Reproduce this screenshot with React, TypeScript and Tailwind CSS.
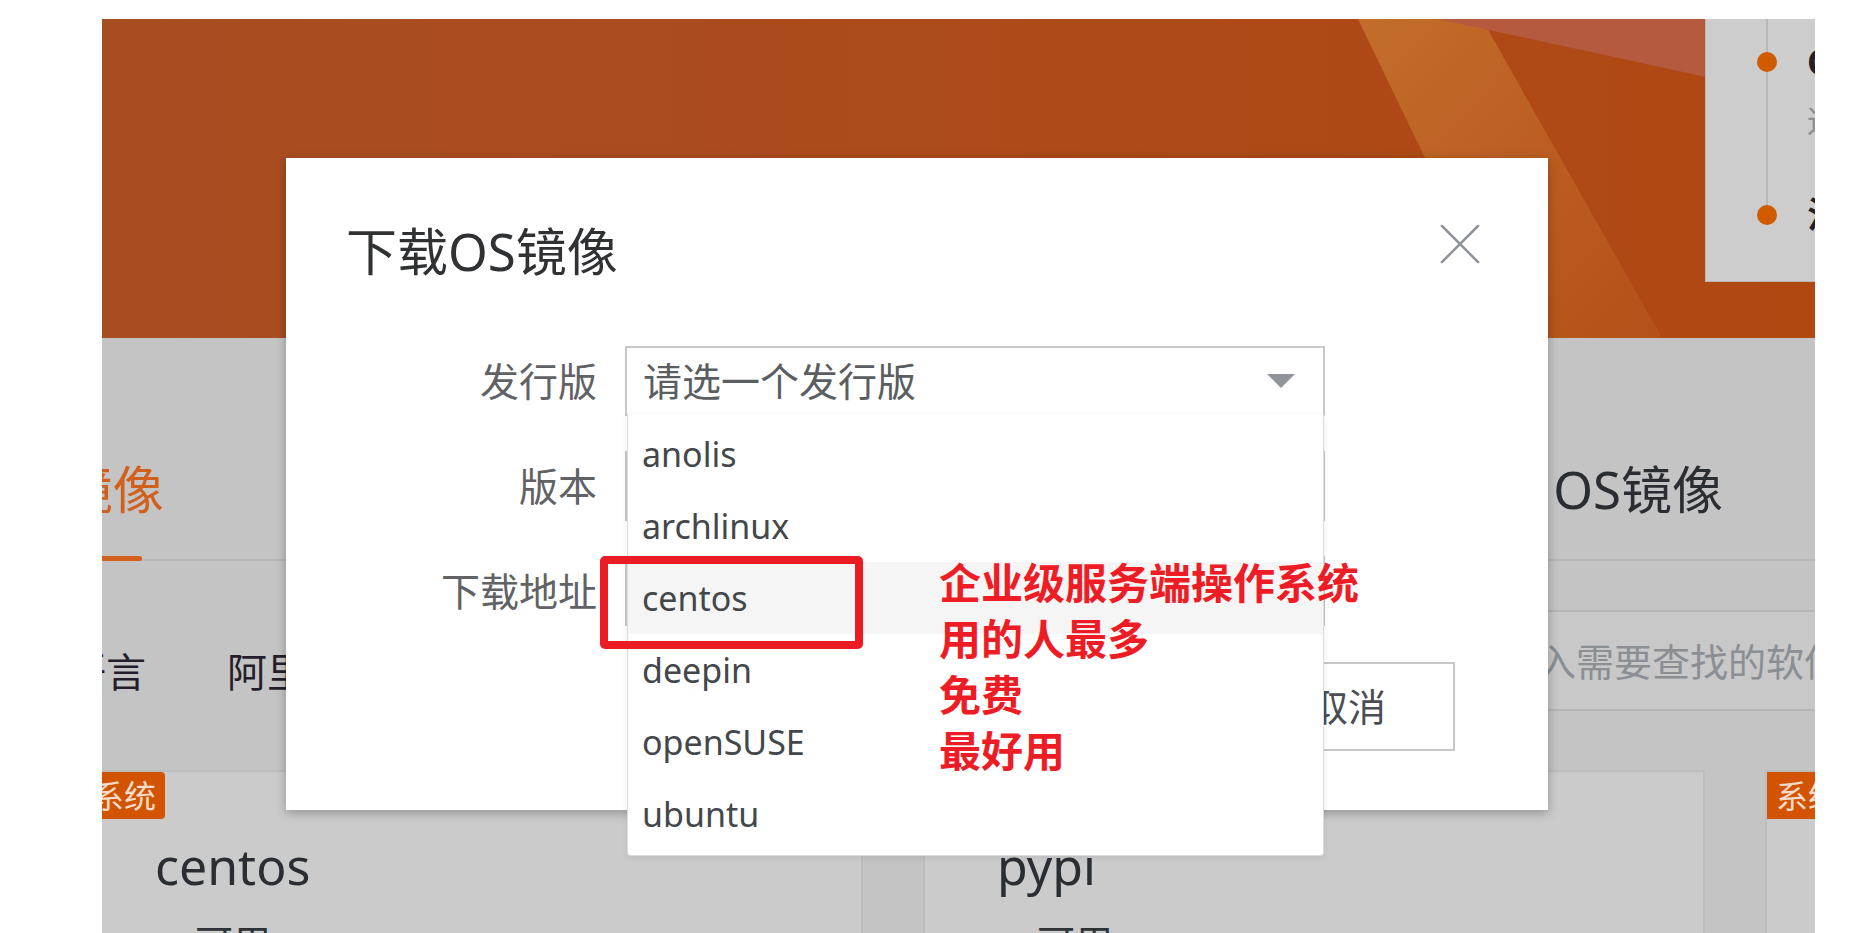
import React from 'react';

const distros = ['anolis', 'archlinux', 'centos', 'deepin', 'openSUSE', 'ubuntu'];

const Banner: React.FC = () => (
  <div className="relative h-[319px] bg-gradient-to-r from-[#a84d22] to-[#b04812] flex justify-end">
    {/* banner artwork */}
    <svg className="absolute inset-0" width="1713" height="319" viewBox="0 0 1713 319">
      <defs>
        <linearGradient id="band" x1="0" y1="0" x2="1" y2="1">
          <stop offset="0" stopColor="#c6742f" />
          <stop offset="0.6" stopColor="#bd5e22" />
          <stop offset="1" stopColor="#b5511a" />
        </linearGradient>
      </defs>
      <polygon points="1256,0 1380,0 1560,319 1410,319" fill="url(#band)" opacity="0.85" />
      <polygon points="1336,0 1604,0 1604,58" fill="#b5593f" />
    </svg>
    <div className="relative w-[400px] mr-[-290px] h-[263px] bg-[#cdcdcd] border-l border-b border-[#bdb7b3] pt-[19px]">
      <div className="absolute left-[60px] top-0 w-[2px] h-[192px] bg-[#b8b8b8]" />
      <div className="relative flex items-center h-[48px]">
        <span className="shrink-0 ml-[51px] w-[20px] h-[20px] rounded-full bg-[#d05a00]" />
        <span className="ml-[30px] text-[36px] font-bold text-[#1f2328] whitespace-nowrap">CentOS 8 停止维护</span>
      </div>
      <div className="mt-[13px] pl-[101px] h-[44px] text-[32px] leading-[44px] text-[#8e8e8e] whitespace-nowrap">逐步迁移至其他发行版</div>
      <div className="relative mt-[48px] flex items-center h-[48px]">
        <span className="shrink-0 ml-[51px] w-[20px] h-[20px] rounded-full bg-[#d05a00]" />
        <span className="ml-[30px] text-[36px] font-bold text-[#1f2328] whitespace-nowrap">注意事项</span>
      </div>
    </div>
  </div>
);

const Tabs: React.FC = () => (
  <div className="relative h-[223px] border-b-2 border-[#b8b8b8] flex items-end pb-[38px]">
    <span className="ml-[-108px] text-[51px] leading-[64px] text-[#d0601c] whitespace-nowrap">OS镜像</span>
    <div className="flex-1" />
    <span className="mr-[92px] text-[51px] leading-[64px] text-[#2a2d31] whitespace-nowrap">OS镜像</span>
    <div className="absolute bottom-[-2px] left-[-80px] w-[120px] h-[5px] rounded-full bg-[#d0601c]" />
  </div>
);

const FilterRow: React.FC = () => (
  <div className="h-[209px] flex items-start">
    <div className="mt-[85px] ml-[-116px] flex gap-[81px] text-[40px] leading-[52px] text-[#241e2c] whitespace-nowrap">
      <span>编程语言</span>
      <span>阿里巴巴</span>
      <span>操作系统</span>
    </div>
    <div className="flex-1" />
    <input
      readOnly
      placeholder="请输入需要查找的软件"
      className="mt-[49px] w-[500px] mr-[-107px] h-[101px] border-2 border-[#b5b5b5] bg-[#c8c8c8] pl-[38px] text-[38px] outline-none placeholder:text-[#8b8e92]"
    />
  </div>
);

const Card: React.FC<{ name: string }> = ({ name }) => (
  <div className="w-[782px] shrink-0 h-[300px] bg-[#cbcbcb] border-2 border-[#bdbdbd]">
    <span className="inline-block h-[47px] px-[9px] text-[32px] leading-[47px] bg-[#d35400] text-[#f3dccb] rounded-r-[4px]">系统</span>
    <div className="mt-[17px] pl-[72px] text-[50px] leading-[60px] text-[#2a2e33]">{name}</div>
    <div className="mt-[21px] pl-[112px] text-[38px] leading-[50px] text-[#2e3236]">可用</div>
  </div>
);

const Dialog: React.FC = () => (
  <div className="absolute left-[184px] top-[139px] w-[1262px] bg-white shadow-[0_3px_10px_rgba(0,0,0,0.28)]">
    <div className="flex justify-between pl-[60px] pr-[68px] pt-[60px]">
      <h2 className="text-[51px] leading-[66px] text-[#303133]">下载OS镜像</h2>
      <svg className="mt-[6px]" width="40" height="40" viewBox="0 0 40 40">
        <path d="M2 2 L38 38 M38 2 L2 38" stroke="#909399" strokeWidth="2.5" strokeLinecap="round" />
      </svg>
    </div>

    <div className="mt-[62px] flex flex-col gap-[35px]">
      <div className="flex items-center h-[70px]">
        <label className="ml-[60px] w-[251px] text-right text-[39px] text-[#606266]">发行版</label>
        <div className="relative ml-[28px] w-[700px] h-[70px] border-2 border-[#c6c8cc] flex items-center justify-between pl-[16px] pr-[28px]">
          <span className="text-[39px] text-[#5a5e62]">请选一个发行版</span>
          <svg width="28" height="14" viewBox="0 0 28 14">
            <polygon points="0,0 28,0 14,14" fill="#909399" />
          </svg>
          {/* open dropdown */}
          <ul className="absolute z-10 left-0 top-full w-[697px] bg-white border-x border-b border-[#dcdcdc] rounded-b-[4px] pt-[4px] pb-[5px] shadow-[0_2px_6px_rgba(0,0,0,0.08)]">
            {distros.map(d => (
              <li
                key={d}
                className={`h-[72px] flex items-center pl-[14px] text-[34px] text-[#43474b] ${d === 'centos' ? 'bg-[#f5f5f5]' : ''}`}
              >
                {d}
              </li>
            ))}
          </ul>
        </div>
      </div>
      <div className="flex items-center h-[70px]">
        <label className="ml-[60px] w-[251px] text-right text-[39px] text-[#606266]">版本</label>
        <div className="ml-[28px] w-[700px] h-[70px] border-2 border-[#c6c8cc]" />
      </div>
      <div className="flex items-center h-[70px]">
        <label className="ml-[60px] w-[251px] text-right text-[39px] text-[#606266]">下载地址</label>
        <div className="ml-[28px] w-[700px] h-[70px] border-2 border-[#c6c8cc]" />
      </div>
    </div>

    <div className="mt-[36px] pb-[59px] pr-[93px] flex justify-end gap-[20px]">
      <button className="h-[89px] px-[67px] border-2 border-[#d35400] bg-[#d35400] text-white text-[38px]">确定</button>
      <button className="h-[89px] px-[67px] border-2 border-[#c8c8c8] bg-white text-[#4a4e53] text-[38px]">取消</button>
    </div>
  </div>
);

const App: React.FC = () => {
  return (
    <div className="w-[1875px] h-[933px] bg-white overflow-hidden pt-[19px] pl-[102px] font-['Noto_Sans','Noto_Sans_CJK_SC',sans-serif]">
      <div className="relative w-[1713px] h-[914px] overflow-hidden bg-[#c4c4c4]">
        <Banner />
        <Tabs />
        <FilterRow />
        <div className="flex gap-[60px] ml-[-21px]">
          <Card name="centos" />
          <Card name="pypi" />
          <Card name="ubuntu" />
        </div>

        <Dialog />

        {/* red markup drawn over the screenshot */}
        <div className="absolute z-20 left-[498px] top-[537px] w-[263px] h-[93px] border-[8px] border-[#ec1c24] rounded-[5px]" />
        <div className="absolute z-20 left-[837px] top-[536px] text-[42px] leading-[56px] font-bold text-[#ee1c25] whitespace-nowrap">
          <div>企业级服务端操作系统</div>
          <div>用的人最多</div>
          <div>免费</div>
          <div>最好用</div>
        </div>
      </div>
    </div>
  );
};

export default App;
